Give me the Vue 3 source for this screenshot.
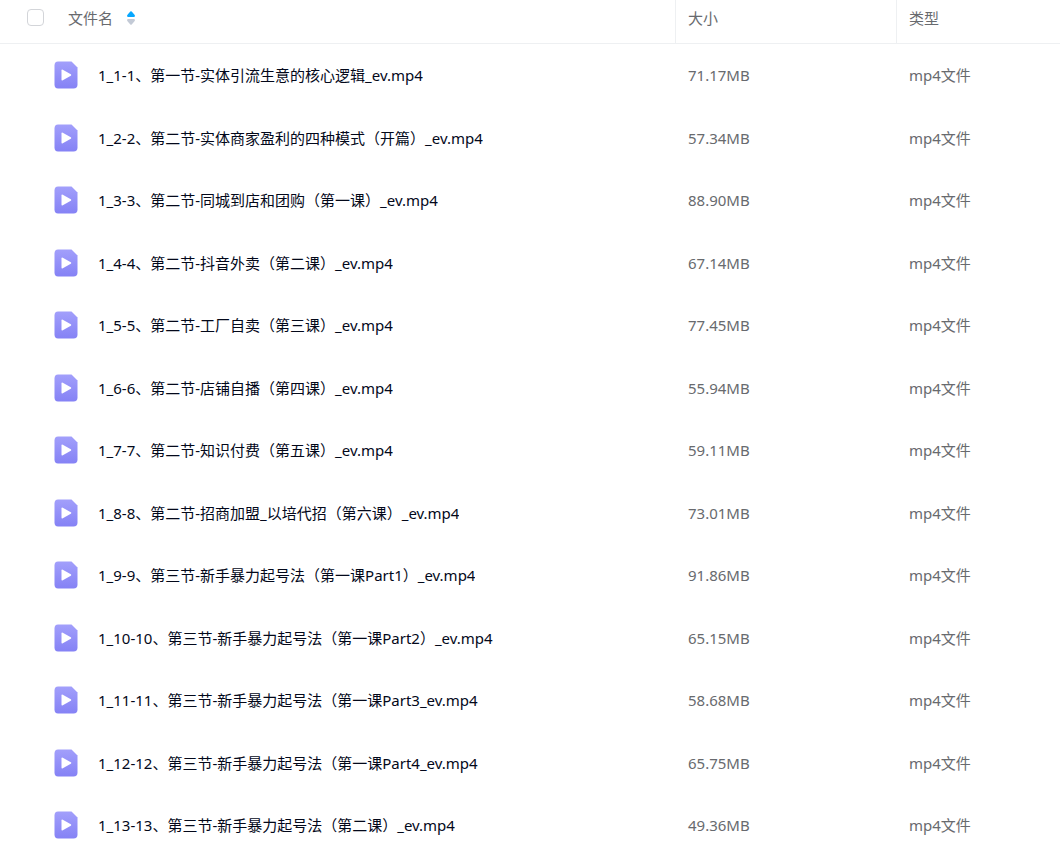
<template>
  <table class="file-table">
    <thead>
      <tr>
        <th class="col-name">
          <div class="head-name">
            <input v-model="allChecked" type="checkbox" class="check-all" aria-label="全选" />
            <button type="button" class="sort-btn" @click="toggleSort">
              <span>文件名</span>
              <svg class="sort-icon" viewBox="0 0 8 14" aria-hidden="true">
                <path :class="asc ? 'on' : 'off'" d="M3.3 0.5 Q4 -0.1 4.7 0.5 L7.7 4 Q8.4 6 6.8 6 H1.2 Q-0.4 6 0.3 4 Z" />
                <path :class="asc ? 'off' : 'on'" d="M3.3 13.5 Q4 14.1 4.7 13.5 L7.7 10 Q8.4 8 6.8 8 H1.2 Q-0.4 8 0.3 10 Z" />
              </svg>
            </button>
          </div>
        </th>
        <th class="col-size">大小</th>
        <th class="col-type">类型</th>
      </tr>
    </thead>
    <tbody>
      <tr v-for="file in sortedFiles" :key="file.id">
        <td>
          <div class="file-cell">
            <svg class="file-icon" viewBox="0 0 24 28" aria-hidden="true">
              <defs>
                <linearGradient :id="'fill-' + file.id" x1="0" y1="0" x2="0" y2="1">
                  <stop offset="0" stop-color="#a29ffb" />
                  <stop offset="1" stop-color="#8582f5" />
                </linearGradient>
              </defs>
              <path :fill="`url(#fill-${file.id})`" d="M4 0.5 H17.5 L23.5 6.5 V23.5 Q23.5 27.5 19.5 27.5 H4 Q0.5 27.5 0.5 23.5 V4.5 Q0.5 0.5 4 0.5 Z" />
              <path fill="#fff" d="M7.5 9.4 Q7.5 8 8.8 8.7 L16.8 13.3 Q17.8 14 16.8 14.7 L8.8 19.3 Q7.5 20 7.5 18.6 Z" />
            </svg>
            <span class="file-name">{{ file.name }}</span>
          </div>
        </td>
        <td>{{ file.size }}</td>
        <td>mp4文件</td>
      </tr>
    </tbody>
  </table>
</template>

<script setup>
import { ref, computed } from 'vue'

const allChecked = ref(false)
const asc = ref(true)

const files = ref([
  { id: 1, name: '1_1-1、第一节-实体引流生意的核心逻辑_ev.mp4', size: '71.17MB' },
  { id: 2, name: '1_2-2、第二节-实体商家盈利的四种模式（开篇）_ev.mp4', size: '57.34MB' },
  { id: 3, name: '1_3-3、第二节-同城到店和团购（第一课）_ev.mp4', size: '88.90MB' },
  { id: 4, name: '1_4-4、第二节-抖音外卖（第二课）_ev.mp4', size: '67.14MB' },
  { id: 5, name: '1_5-5、第二节-工厂自卖（第三课）_ev.mp4', size: '77.45MB' },
  { id: 6, name: '1_6-6、第二节-店铺自播（第四课）_ev.mp4', size: '55.94MB' },
  { id: 7, name: '1_7-7、第二节-知识付费（第五课）_ev.mp4', size: '59.11MB' },
  { id: 8, name: '1_8-8、第二节-招商加盟_以培代招（第六课）_ev.mp4', size: '73.01MB' },
  { id: 9, name: '1_9-9、第三节-新手暴力起号法（第一课Part1）_ev.mp4', size: '91.86MB' },
  { id: 10, name: '1_10-10、第三节-新手暴力起号法（第一课Part2）_ev.mp4', size: '65.15MB' },
  { id: 11, name: '1_11-11、第三节-新手暴力起号法（第一课Part3_ev.mp4', size: '58.68MB' },
  { id: 12, name: '1_12-12、第三节-新手暴力起号法（第一课Part4_ev.mp4', size: '65.75MB' },
  { id: 13, name: '1_13-13、第三节-新手暴力起号法（第二课）_ev.mp4', size: '49.36MB' }
])

const sortedFiles = computed(() => asc.value ? files.value : [...files.value].reverse())

const toggleSort = () => asc.value = !asc.value
</script>

<style>
body {
  margin: 0;
  background: #fff;
}
</style>

<style scoped>
.file-table {
  width: 100%;
  table-layout: fixed;
  border-collapse: separate;
  border-spacing: 0;
  font-family: "Noto Sans", "Noto Sans CJK SC", sans-serif;
  font-size: 15px;
  line-height: 20px;
  color: #686a6e;
}

th {
  box-sizing: border-box;
  height: 44px;
  padding: 0 12px 8px;
  border-bottom: 1px solid #eef0f2;
  font-weight: 400;
  text-align: left;
  vertical-align: middle;
}

.col-name {
  padding-left: 27px;
}

.col-size {
  width: 221px;
  border-left: 1px solid #eef0f2;
}

.col-type {
  width: 164px;
  border-left: 1px solid #eef0f2;
}

.head-name {
  display: flex;
  align-items: center;
  gap: 24px;
}

.check-all {
  appearance: none;
  box-sizing: border-box;
  width: 17px;
  height: 17px;
  margin: 0;
  background: #fff;
  border: 1px solid #d3d5d9;
  border-radius: 4px;
  cursor: pointer;
}

.check-all:checked {
  background: #06a7ff;
  border-color: #06a7ff;
}

.sort-btn {
  display: flex;
  align-items: center;
  gap: 14px;
  padding: 0;
  background: none;
  border: none;
  font: inherit;
  color: inherit;
  cursor: pointer;
}

.sort-icon {
  width: 8px;
  height: 14px;
}

.sort-icon .on {
  fill: #06a7ff;
}

.sort-icon .off {
  fill: #c3cad6;
}

td {
  box-sizing: border-box;
  height: 62px;
  padding: 0 13px;
  vertical-align: middle;
}

tbody tr:nth-child(even) td {
  height: 63px;
}

tbody tr:hover td {
  background: #fafafc;
}

td:first-child {
  padding-left: 54px;
}

.file-cell {
  display: flex;
  align-items: center;
  gap: 20px;
}

.file-icon {
  flex: none;
  width: 24px;
  height: 28px;
}

.file-name {
  overflow: hidden;
  color: #03081a;
  text-overflow: ellipsis;
  white-space: nowrap;
}
</style>
